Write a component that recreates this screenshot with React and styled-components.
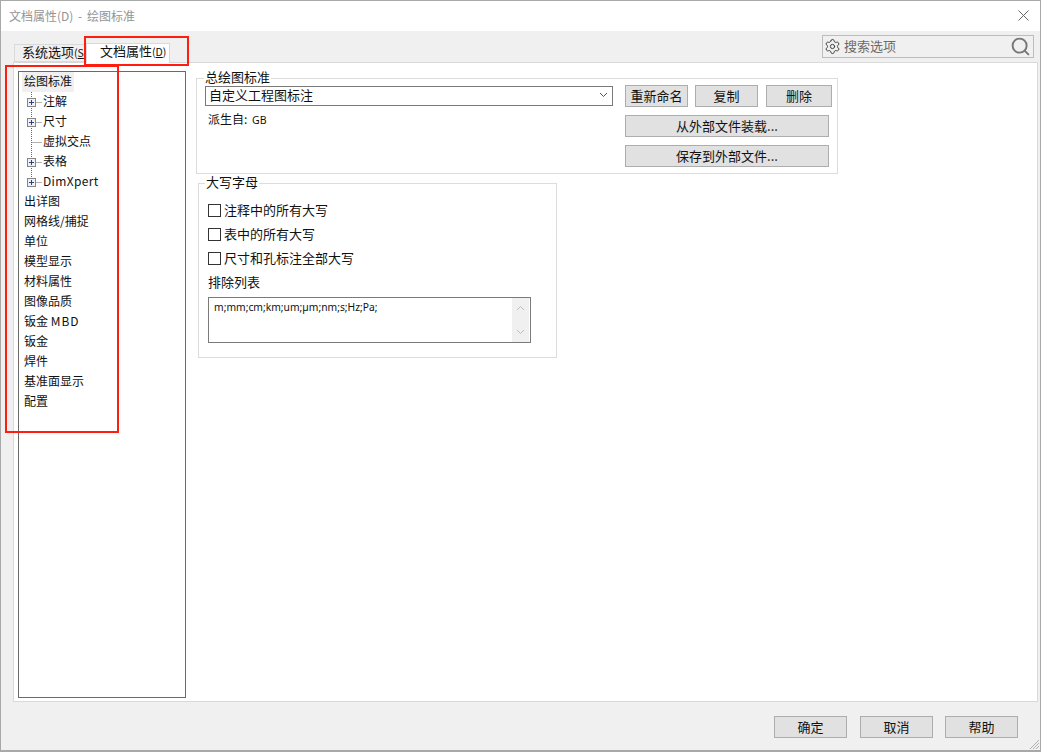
import React from "react";
import styled, { createGlobalStyle } from "styled-components";
import { Settings, Search } from "lucide-react";

const Global = createGlobalStyle`
  html, body { margin: 0; padding: 0; background: #fff; }
  body { font-family: "Noto Sans CJK SC", "Noto Sans", sans-serif; font-size: 12px; color: #111; }
  * { box-sizing: border-box; }
`;

const Window = styled.div`
  position: relative;
  width: 1041px;
  height: 752px;
  display: flex;
  flex-direction: column;
  background: #f0f0f0;
  border: 1px solid #a8a8a8;
  border-bottom-width: 2px;
  overflow: hidden;
`;
const TitleBar = styled.header`
  height: 30px;
  flex: none;
  background: #fff;
  display: flex;
  align-items: center;
  justify-content: space-between;
  padding: 0 11px 2px 8px;
  color: #949494;
  font-size: 12px;
  word-spacing: 2px;
`;
const TabStrip = styled.div`
  height: 31px;
  flex: none;
  display: flex;
  justify-content: space-between;
  align-items: flex-end;
  padding: 0 6px 0 13px;
`;
const Tabs = styled.div`
  display: flex;
  align-items: flex-end;
`;
const Tab = styled.div`
  height: ${p => (p.$active ? "20px" : "18px")};
  width: ${p => (p.$active ? "84px" : "72px")};
  line-height: 14px;
  padding-left: ${p => (p.$active ? "13px" : "7px")};
  font-size: 13px;
  white-space: nowrap;
  background: ${p => (p.$active ? "#fff" : "#f0f0f0")};
  border: 1px solid #d9d9d9;
  border-bottom: ${p => (p.$active ? "none" : "1px solid #d9d9d9")};
  margin-bottom: ${p => (p.$active ? "-1px" : "0")};
  position: relative;
  z-index: ${p => (p.$active ? 1 : 0)};
`;
const Mnemonic = styled.span`
  font-size: 10.5px;
  u { text-underline-offset: 1px; }
`;
const SearchBox = styled.div`
  width: 212px;
  height: 23px;
  margin-bottom: 4px;
  display: flex;
  align-items: center;
  gap: 3px;
  padding: 0 2px 1px 1px;
  background: #f0f0f0;
  border: 1px solid #bcbcbc;
  color: #6b6b6b;
  font-size: 13px;
`;
const SearchText = styled.span`
  flex: 1;
  line-height: 18px;
`;
const Panel = styled.main`
  height: 640px;
  flex: none;
  margin: 0 2px 0 12px;
  padding: 8px 0 3px 4px;
  display: flex;
  gap: 10px;
  background: #fff;
  border: 1px solid #d9d9d9;
`;
const Tree = styled.nav`
  width: 168px;
  flex: none;
  border: 1px solid #6a6a6a;
  padding: 0 3px;
`;
const TreeRow = styled.div`
  height: 20px;
  display: flex;
  align-items: center;
  font-size: 12px;
`;
const TreeLabel = styled.span`
  height: 20px;
  line-height: 18px;
  padding: 0 ${p => (p.$selected ? "2px" : "0")};
  margin-left: ${p => (p.$child || p.$selected ? "0" : "2px")};
  background: ${p => (p.$selected ? "#f0f0f0" : "transparent")};
  letter-spacing: ${p => (p.$wide ? "0.35px" : "0")};
`;
const Latin = styled.span`
  letter-spacing: 1px;
`;
const Column = styled.div`
  display: flex;
  flex-direction: column;
`;
const Group = styled.fieldset`
  margin: 0;
  min-width: 0;
  border: 1px solid #dcdcdc;
  width: ${p => p.$w}px;
  height: ${p => p.$h}px;
  padding: 0;
`;
const StandardGroup = styled(Group)`
  display: flex;
  padding: 0 0 0 8px;
  gap: 12px;
`;
const CapsGroup = styled(Group)`
  margin: 2px 0 0 2px;
  padding: 8px 0 0 9px;
`;
const Legend = styled.legend`
  margin-left: ${p => p.$shift}px;
  padding: 0 1px;
  font-size: 13px;
  line-height: 12px;
  height: 14px;
`;
const StandardLeft = styled.div`
  width: 408px;
  padding-top: 1px;
`;
const Combo = styled.div`
  height: 20px;
  border: 1px solid #7a7a7a;
  display: flex;
  align-items: center;
  justify-content: space-between;
  padding: 0 4px 2px 3px;
  font-size: 13px;
  line-height: 18px;
`;
const Derived = styled.div`
  margin: 5px 0 0 3px;
  line-height: 16px;
  font-size: 12px;
`;
const Small = styled.span`
  font-size: 10.5px;
  font-family: "Noto Sans", sans-serif;
  margin-left: 2px;
`;
const ButtonStack = styled.div`
  display: flex;
  flex-direction: column;
  gap: 8px;
`;
const ButtonRow = styled.div`
  display: flex;
  gap: 7px;
`;
const Button = styled.button`
  width: ${p => p.$w}px;
  height: 22px;
  margin: ${p => p.$m || 0};
  padding: 0 0 2px;
  background: #e1e1e1;
  border: 1px solid #adadad;
  font: 13px/1 "Noto Sans CJK SC", sans-serif;
  color: #111;
`;
const CheckRow = styled.label`
  height: 24px;
  display: flex;
  align-items: center;
  gap: 3px;
  font-size: 13px;
`;
const CheckText = styled.span`
  padding-bottom: 2px;
`;
const Check = styled.input.attrs({ type: "checkbox" })`
  appearance: none;
  width: 13px;
  height: 13px;
  margin: 0;
  background: #fff;
  border: 1px solid #333;
`;
const FieldLabel = styled.div`
  height: 24px;
  line-height: 23px;
  font-size: 13px;
`;
const ListBox = styled.div`
  margin-top: 3px;
  width: 323px;
  height: 46px;
  border: 1px solid #7a7a7a;
  display: flex;
  justify-content: space-between;
  padding-left: 5px;
`;
const ListText = styled.div`
  font-family: "Noto Sans", sans-serif;
  font-size: 10.3px;
  line-height: 18px;
`;
const ScrollBar = styled.div`
  width: 17px;
  margin-right: 1px;
  background: #f0f0f0;
  display: flex;
  flex-direction: column;
  justify-content: space-between;
  align-items: center;
  padding: 7px 0;
`;
const Footer = styled.footer`
  flex: 1;
  display: flex;
  justify-content: flex-end;
  align-items: flex-start;
  padding: 14px 22px 0 0;
`;
const FooterGap = styled.div`
  display: flex;
  gap: 13px;
`;
const Marker = styled.div`
  position: absolute;
  pointer-events: none;
  border: 2px solid #ff1d10;
  left: ${p => p.$x}px;
  top: ${p => p.$y}px;
  width: ${p => p.$w}px;
  height: ${p => p.$h}px;
  z-index: 5;
`;
const Grip = styled.svg`
  position: absolute;
  right: 0;
  bottom: 0;
`;
const CloseIcon = styled.svg`
  display: block;
`;
const TwigIcon = styled.svg`
  flex: none;
  margin-left: 2px;
`;

const Twig = ({ expander, last }) => (
  <TwigIcon width="19" height="20" viewBox="0 0 19 20">
    <path d={`M7.5 0V${last ? 10 : 20}`} stroke="#666" strokeDasharray="1 1" fill="none" />
    <path d="M7.5 10.5H18" stroke="#666" strokeDasharray="1 1" fill="none" />
    {expander && (
      <>
        <rect x="3.5" y="6.5" width="8" height="8" fill="#eef0f4" stroke="#858585" />
        <path d="M5 10.5H10M7.5 8V13" stroke="#2f3f8f" fill="none" />
      </>
    )}
  </TwigIcon>
);

const topLevel = ["出详图", "网格线/捕捉", "单位", "模型显示", "材料属性", "图像品质"];
const topLevelEnd = ["钣金", "焊件", "基准面显示", "配置"];
const capsOptions = ["注释中的所有大写", "表中的所有大写", "尺寸和孔标注全部大写"];

const Chevron = ({ up, color = "#555" }) => (
  <svg width="9" height="6" viewBox="0 0 9 6">
    <path d={up ? "M1 5L4.5 1.5L8 5" : "M1 1L4.5 4.5L8 1"} stroke={color} fill="none" />
  </svg>
);

export default function App() {
  return (
    <Window>
      <Global />
      <TitleBar>
        <span>文档属性(D) - 绘图标准</span>
        <CloseIcon width="11" height="11" viewBox="0 0 11 11">
          <path d="M0.5 0.5L10.5 10.5M10.5 0.5L0.5 10.5" stroke="#666" fill="none" />
        </CloseIcon>
      </TitleBar>
      <TabStrip>
        <Tabs>
          <Tab>系统选项<Mnemonic>(<u>S</u>)</Mnemonic></Tab>
          <Tab $active>文档属性<Mnemonic>(<u>D</u>)</Mnemonic></Tab>
        </Tabs>
        <SearchBox>
          <Settings size={17} strokeWidth={1.3} color="#333" />
          <SearchText>搜索选项</SearchText>
          <Search size={21} strokeWidth={2.2} color="#777" />
        </SearchBox>
      </TabStrip>
      <Panel>
        <Tree>
          <TreeRow><TreeLabel $selected>绘图标准</TreeLabel></TreeRow>
          <TreeRow><Twig expander /><TreeLabel $child>注解</TreeLabel></TreeRow>
          <TreeRow><Twig expander /><TreeLabel $child>尺寸</TreeLabel></TreeRow>
          <TreeRow><Twig /><TreeLabel $child>虚拟交点</TreeLabel></TreeRow>
          <TreeRow><Twig expander /><TreeLabel $child>表格</TreeLabel></TreeRow>
          <TreeRow><Twig expander last /><TreeLabel $child $wide>DimXpert</TreeLabel></TreeRow>
          {topLevel.map(t => (
            <TreeRow key={t}><TreeLabel>{t}</TreeLabel></TreeRow>
          ))}
          <TreeRow><TreeLabel>钣金 <Latin>MBD</Latin></TreeLabel></TreeRow>
          {topLevelEnd.map(t => (
            <TreeRow key={t}><TreeLabel>{t}</TreeLabel></TreeRow>
          ))}
        </Tree>
        <Column>
          <StandardGroup $w={642} $h={103}>
            <Legend $shift={-1}>总绘图标准</Legend>
            <StandardLeft>
              <Combo>
                <span>自定义工程图标注</span>
                <Chevron />
              </Combo>
              <Derived>派生自: <Small>GB</Small></Derived>
            </StandardLeft>
            <ButtonStack>
              <ButtonRow>
                <Button $w={63}>重新命名</Button>
                <Button $w={63}>复制</Button>
                <Button $w={66} $m="0 0 0 1px">删除</Button>
              </ButtonRow>
              <Button $w={204}>从外部文件装载...</Button>
              <Button $w={204}>保存到外部文件...</Button>
            </ButtonStack>
          </StandardGroup>
          <CapsGroup $w={359} $h={182}>
            <Legend $shift={-3}>大写字母</Legend>
            {capsOptions.map(t => (
              <CheckRow key={t}><Check /><CheckText>{t}</CheckText></CheckRow>
            ))}
            <FieldLabel>排除列表</FieldLabel>
            <ListBox>
              <ListText>m;mm;cm;km;um;µm;nm;s;Hz;Pa;</ListText>
              <ScrollBar>
                <Chevron up color="#bbb" />
                <Chevron color="#bbb" />
              </ScrollBar>
            </ListBox>
          </CapsGroup>
        </Column>
      </Panel>
      <Footer>
        <FooterGap>
          <Button $w={73}>确定</Button>
          <Button $w={73}>取消</Button>
          <Button $w={73} $m="0 0 0 -1px">帮助</Button>
        </FooterGap>
      </Footer>
      <Grip width="12" height="12" viewBox="0 0 12 12">
        <path d="M11 2L2 11M11 5L5 11M11 8L8 11" stroke="#b0b0b0" fill="none" />
      </Grip>
      <Marker $x={4} $y={64} $w={114} $h={368} />
      <Marker $x={83} $y={35} $w={105} $h={30} />
    </Window>
  );
}
